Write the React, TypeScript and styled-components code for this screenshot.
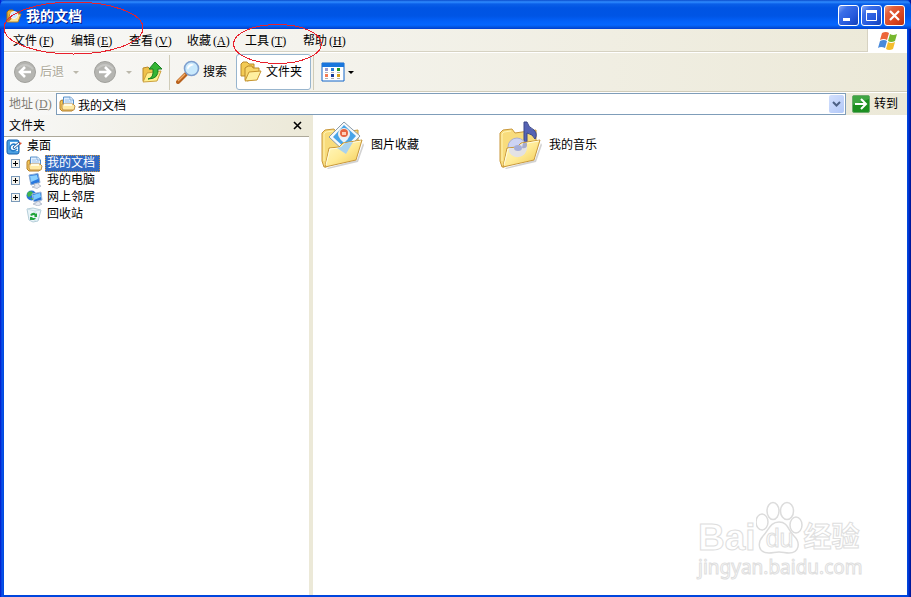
import React from 'react';
import styled, { createGlobalStyle, css } from 'styled-components';

const GlobalStyle = createGlobalStyle`
  * { box-sizing: border-box; }
  body {
    margin: 0;
    font-family: 'Liberation Sans', 'Noto Sans CJK SC', sans-serif;
    font-size: 12px;
    line-height: 16px;
    color: #000;
    background: #0a2fd8;
  }
  button, input {
    font: inherit;
    color: inherit;
    padding: 0;
    margin: 0;
    border: 0;
    background: none;
  }
  svg { display: block; flex: none; }
`;

const Window = styled.div`
  position: relative;
  display: flex;
  flex-direction: column;
  min-height: 100vh;
  padding: 0 4px 2px;
  background: linear-gradient(to right, #0018c8 0, #0831d9 1px, #0855ec 2px, #0046dd 4px, #0046dd calc(100% - 3px), #0028c8 calc(100% - 2px), #00138c 100%);
`;

const TitleBar = styled.header`
  display: flex;
  align-items: center;
  height: 29px;
  margin: 0 -4px;
  padding: 2px 6px 0;
  gap: 4px;
  border-radius: 6px 6px 0 0;
  background: linear-gradient(to bottom, #0a4ccc 0, #2f8cff 2px, #0a5fe8 4px, #0054e3 8px, #0055e5 16px, #0360f8 21px, #0566ff 25px, #0455e0 27px, #003dd0 29px);
`;

const Title = styled.h1`
  flex: 1;
  margin: 0;
  font-size: 14px;
  line-height: 16px;
  font-weight: 700;
  color: #fff;
  text-shadow: 1px 1px 0 #0a1883;
`;

const Caption = styled.div`
  display: flex;
  gap: 2px;
`;

const CaptionButton = styled.button<{ $close?: boolean }>`
  width: 21px;
  height: 21px;
  border: 1px solid #fff;
  border-radius: 3px;
  background: ${(p) =>
    p.$close
      ? 'linear-gradient(135deg, #f0a080 0, #e2603c 25%, #d9451f 65%, #b83010 100%)'
      : 'linear-gradient(135deg, #88a8f8 0, #3b6fe8 25%, #2558dc 65%, #1240b8 100%)'};
`;

const barFill = css`
  background: linear-gradient(to right, #f8f8f7, #ece9d8);
`;

const MenuRow = styled.div`
  display: flex;
  height: 24px;
  border-bottom: 1px solid #fff;
  ${barFill}
`;

const MenuBar = styled.nav`
  flex: 1;
  display: flex;
  align-items: center;
  gap: 16px;
  padding: 1px 0 0 9px;
  border-bottom: 1px solid #d6d2c2;
  border-right: 1px solid #d6d2c2;
`;

const MenuItem = styled.button`
  display: flex;
  align-items: center;
  width: 42px;
  white-space: nowrap;
`;

const Key = styled.span`
  display: flex;
  margin-left: 2px;
  font-family: 'Liberation Serif', serif;
  font-size: 12px;
  line-height: 16px;
`;

const Flag = styled.div`
  display: flex;
  align-items: center;
  justify-content: center;
  width: 39px;
  background: #fff;
`;

const Toolbar = styled.div`
  display: flex;
  align-items: center;
  height: 39px;
  padding: 0 9px;
  border-bottom: 1px solid #d0ccba;
  ${barFill}
`;

const ToolButton = styled.button<{ $muted?: boolean; $pressed?: boolean; $wide?: number }>`
  display: flex;
  align-items: center;
  gap: 3px;
  height: 36px;
  width: ${(p) => (p.$wide ? p.$wide + 'px' : 'auto')};
  white-space: nowrap;
  ${(p) => p.$muted && css`color: #aca899; text-shadow: 1px 1px 0 #fff;`}
  ${(p) =>
    p.$pressed &&
    css`
      padding: 0 3px;
      gap: 4px;
      border: 1px solid #98b5ce;
      border-radius: 3px;
      background: #fff;
    `}
`;

const Divider = styled.span<{ $tight?: boolean }>`
  width: 1px;
  height: 35px;
  margin: ${(p) => (p.$tight ? '0 7px 0 2px' : '0 6px')};
  background: #d0ccb8;
`;

const ToolGap = styled.span`
  width: 3px;
`;

const Caret = styled.span<{ $muted?: boolean }>`
  border: 3px solid transparent;
  border-top-color: ${(p) => (p.$muted ? '#bbb8ab' : '#000')};
  border-bottom: 0;
`;

const AddressBar = styled.form`
  display: flex;
  align-items: center;
  height: 23px;
  border-top: 1px solid #fff;
  ${barFill}
`;

const AddressLabel = styled.label`
  display: flex;
  width: 52px;
  padding-left: 5px;
  white-space: nowrap;
  color: #7f7c73;
`;

const AddressBox = styled.div`
  flex: 1;
  display: flex;
  align-items: center;
  height: 22px;
  padding: 0 1px 0 2px;
  gap: 2px;
  border: 1px solid #7f9db9;
  background: #fff;
`;

const AddressInput = styled.input`
  flex: 1;
  min-width: 0;
  height: 18px;
  outline: 0;
`;

const DropButton = styled.button`
  display: flex;
  align-items: center;
  justify-content: center;
  width: 15px;
  height: 18px;
  border-radius: 2px;
  background: linear-gradient(135deg, #d3e0fd, #b2c8f8);
`;

const GoButton = styled.button`
  display: flex;
  align-items: center;
  gap: 4px;
  width: 61px;
  padding-left: 6px;
`;

const Body = styled.div`
  flex: 1;
  display: flex;
  background: #ece9d8;
`;

const Sidebar = styled.aside`
  width: 305px;
  background: #fff;
`;

const PaneHeader = styled.div`
  display: flex;
  justify-content: space-between;
  align-items: center;
  height: 22px;
  padding: 0 6px 0 5px;
  border-bottom: 1px solid #aca899;
  ${barFill}
`;

const CloseButton = styled.button`
  display: flex;
  align-items: center;
  height: 14px;
`;

const Tree = styled.ul`
  margin: 0;
  padding: 1px 0 0;
  list-style: none;
`;

const TreeRow = styled.li<{ $root?: boolean }>`
  display: flex;
  align-items: center;
  height: 17px;
  padding-left: ${(p) => (p.$root ? 2 : 7)}px;
`;

const Toggle = styled.span`
  display: flex;
  width: 15px;
`;

const ToggleButton = styled.button`
  width: 9px;
  height: 9px;
`;

const Label = styled.span<{ $selected?: boolean }>`
  margin-left: 2px;
  padding: 0 1px;
  line-height: 15px;
  border: 1px solid transparent;
  ${(p) =>
    p.$selected &&
    css`
      padding-right: 4px;
      color: #fff;
      background: #316ac5;
      border: 1px dotted #ce953a;
    `}
`;

const Content = styled.main`
  position: relative;
  flex: 1;
  margin-left: 4px;
  padding: 6px 7px;
  background: #fff;
`;

const Files = styled.div`
  display: grid;
  grid-template-columns: repeat(auto-fill, 178px);
`;

const FileItem = styled.div`
  display: flex;
  align-items: center;
  gap: 7px;
  height: 48px;
`;

const Watermark = styled.div`
  position: absolute;
  right: 45px;
  bottom: 16px;
  width: 164px;
  color: #fff;
  -webkit-text-stroke: 1px #dedede;
`;

const Brand = styled.div`
  display: flex;
  align-items: flex-end;
  height: 54px;
  font-weight: 700;
  font-size: 37px;
  line-height: 34px;
`;

const Paw = styled.div`
  display: grid;
  place-items: end center;
  width: 48px;
  & > * { grid-area: 1 / 1; }
`;

const Du = styled.span`
  font-size: 25px;
  line-height: 34px;
  font-weight: 400;
`;

const Cn = styled.span`
  font-size: 28px;
`;

const Site = styled.div`
  font-family: 'Noto Sans', sans-serif;
  font-size: 19px;
  line-height: 24px;
`;

const Marks = styled.svg`
  position: absolute;
  left: 0;
  top: 0;
  pointer-events: none;
`;

const FolderSearch = () => (
  <svg width="16" height="16" viewBox="0 0 16 16">
    <path d="M1 13V4l2-2h4l1 2h5v3" fill="#e9b33e" stroke="#9c6a13" />
    <path d="M1 14 4 6h11l-3 8z" fill="#ffe393" stroke="#b98421" />
    <circle cx="8" cy="7" r="3.5" fill="#cbeaff" stroke="#f4f6fb" />
    <path d="m5 10-3 3" stroke="#c66b29" strokeWidth="2" />
  </svg>
);

const DocsIcon = () => (
  <svg width="17" height="16" viewBox="0 0 17 16">
    <path d="M1 6q0-2 3-2v8h11v1l-2 2H3l-2-2z" fill="#f4c85b" stroke="#b5812c" />
    <path d="M4.5 1h7l3 3v6h-10z" fill="#e2f0ff" stroke="#5790cb" />
    <path d="M11 1v3h3" fill="#fff" stroke="#5790cb" strokeWidth=".7" />
    <path d="M6 4h4M6 6h7" stroke="#9cc2ec" />
    <path d="M3 8h11l2 2-1 4H4l-1-2z" fill="#ffeaa6" stroke="#c2924a" />
    <path d="M5 8h8v2H5z" fill="#fffbe4" />
  </svg>
);

const DesktopIcon = () => (
  <svg width="17" height="16" viewBox="0 0 17 16">
    <rect x="1" y="1" width="12" height="14" rx="2" fill="#4aa0e3" stroke="#1660ad" />
    <path d="M4 3h8v9H4z" fill="#f3faff" />
    <path d="M10 6C7 4 4 6 4 9s4 4 7 1" fill="none" stroke="#267cc8" strokeWidth="1.6" />
    <path d="m7 8 6-5 1 2-6 5z" fill="#fff" stroke="#1a5da5" />
    <path d="m13 3 3 1-2 2z" fill="#df5634" />
  </svg>
);

const ComputerIcon = () => (
  <svg width="17" height="16" viewBox="0 0 17 16">
    <path d="m3 2 9-1.5 2 9L5 12z" fill="#2979df" stroke="#8cabd3" />
    <path d="m4 3 7-1 1 4-7 3z" fill="#8bd1ff" />
    <path d="m8 11 4-1 1 2 2 1-4 2.5L6 14l3-1z" fill="#e5e9f1" stroke="#a4aec0" strokeWidth=".7" />
  </svg>
);

const NetworkIcon = () => (
  <svg width="17" height="16" viewBox="0 0 17 16">
    <circle cx="5.5" cy="5.5" r="5" fill="#2877db" />
    <path d="M2 2q4-2 5 1L5 6 2 7 1 4zM4 8h4l-1 2z" fill="#42b54b" />
    <path d="m6 4 9-2 1 8-8 2z" fill="#2672d4" stroke="#a5bad8" />
    <path d="m7 5 7-2 1 4-7 3z" fill="#7bcbff" />
    <path d="m10 12 4-1v2l2 1-4 2-5-2 3-1z" fill="#e5e9f1" stroke="#a4aec0" strokeWidth=".7" />
  </svg>
);

const BinIcon = () => (
  <svg width="17" height="16" viewBox="0 0 17 16">
    <path d="m1 2 6-1 8 2-3 11-5 1-4-2z" fill="#e9f5f9" stroke="#b5ced9" />
    <path d="m1 2 8 2 6-1M9 4v10" fill="none" stroke="#c9dde6" />
    <path d="M4 8q3-4 6-1l1-1v4H8l1-1q-2-2-3 0zM4 10v3h4l2-2H7l-1-1z" fill="#21a43c" />
  </svg>
);

const NavIcon = ({ forward }: { forward?: boolean }) => (
  <svg width="24" height="24" viewBox="0 0 24 24">
    <circle cx="12" cy="12" r="10.5" fill="#b5b5b1" stroke="#a1a19d" />
    <path d="M4 9q8-8 16 0" stroke="#c6c6c3" strokeWidth="2" fill="none" />
    <path
      d={forward ? 'M6 12h11m-5-5 5 5-5 5' : 'M18 12H7m5-5-5 5 5 5'}
      fill="none"
      stroke="#fff"
      strokeWidth="2.6"
    />
  </svg>
);

const UpIcon = () => (
  <svg width="21" height="24" viewBox="0 0 21 24">
    <path d="M1 21V8l5-1 2 2 7-1v5" fill="#efc24c" stroke="#ba8a2b" />
    <path d="m1 22 4-9 14-2-4 10z" fill="#fff08e" stroke="#cca03c" />
    <path d="M6 19q6-1 5-10H7l6-7 7 7h-4q1 10-10 10z" fill="#35b534" stroke="#177f21" />
  </svg>
);

const SearchIcon = () => (
  <svg width="24" height="24" viewBox="0 0 24 24">
    <path d="m10 14-8 8" stroke="#b8621e" strokeWidth="4" strokeLinecap="round" />
    <path d="m9 14-7 7" stroke="#f3ad68" strokeWidth="1.5" />
    <circle cx="15.5" cy="8.5" r="7" fill="#c9e9fc" stroke="#7e9fce" strokeWidth="1.6" />
    <path d="M11 8q1-4 5-4l2 1q-5 1-6 5z" fill="#fff" />
  </svg>
);

const FoldersIcon = () => (
  <svg width="22" height="22" viewBox="0 0 22 22">
    <path d="M1 15V3l2-2h4l2 2h5v5L5 15z" fill="#f3cb55" stroke="#b98a2c" />
    <path d="M5 19V7l3-2h4l1 2h6v5L8 20z" fill="#f8d76b" stroke="#b98a2c" />
    <path d="m5 20 4-9 12-1-4 9z" fill="#fff0a0" stroke="#c69630" />
  </svg>
);

const ViewsIcon = () => (
  <svg width="24" height="20" viewBox="0 0 24 20">
    <path d="M1 1h22v18H1z" fill="#fff" stroke="#1064c8" />
    <path d="M1 1h22v4H1z" fill="#1976dd" />
    {['#9b9bce', '#277bd6', '#229928', '#f67b52', '#173c98', '#d5a019'].map((c, i) => (
      <g key={c}>
        <path d={`M${4 + (i % 3) * 6} ${i < 3 ? 6 : 12}h3v3h-3z`} fill={c} />
        <path d={`M${4 + (i % 3) * 6} ${i < 3 ? 10.5 : 16.5}h3`} stroke="#b1b1b1" />
      </g>
    ))}
  </svg>
);

const WindowsIcon = () => (
  <svg width="22" height="20" viewBox="0 0 22 20">
    <path d="M5 2q4-2 7 0l-2 7q-3-2-7 0z" fill="#ed6538" />
    <path d="M13 3q3 2 7 0l-2 7q-4 2-7 0z" fill="#77b72f" />
    <path d="M3 10q4-2 7 0l-2 7q-4-2-7 0z" fill="#4889db" />
    <path d="M11 11q3 2 7 0l-2 7q-4 2-7 0z" fill="#f5bd2c" />
  </svg>
);

const GoIcon = () => (
  <svg width="18" height="18" viewBox="0 0 18 18">
    <rect x=".5" y=".5" width="17" height="17" rx="1.5" fill="#1c8f20" stroke="#6aa96c" />
    <path d="M1 1h16v3L1 10z" fill="#3fa542" />
    <path d="M3 9h11M9 4l5 5-5 5" fill="none" stroke="#fff" strokeWidth="2" />
  </svg>
);

const PlusIcon = () => (
  <svg width="9" height="9" viewBox="0 0 9 9">
    <rect x=".5" y=".5" width="8" height="8" fill="#f6f4ee" stroke="#7b9ab9" />
    <path d="M2 4.5h5M4.5 2v5" stroke="#000" />
  </svg>
);

const BigFolder = ({ music }: { music?: boolean }) => {
  const id = music ? 'flap-music' : 'flap-pictures';
  return (
    <svg width="44" height="48" viewBox="0 0 44 48">
      <defs>
        <linearGradient id={id} x1="0" y1="0" x2="1" y2="1">
          <stop offset="0" stopColor="#fffbc8" />
          <stop offset=".5" stopColor="#ffeb97" />
          <stop offset="1" stopColor="#f0c850" />
        </linearGradient>
      </defs>
      <path d="m7 47 30-8 6-17 1 2-6 17-30 7z" fill="#b4b4b4" opacity=".6" />
      <path d="M4 46 2 40V12l3-3 9-1 3 4 21-3v14L6 46z" fill="#f8dc7c" stroke="#c8973a" />
      <path d="M4 40V13l2-2 7-1" fill="none" stroke="#fff3b4" />
      {music ? (
        <>
          <path d="M26 26V1h3q1 5 7 8 4 4 1 9-2-5-8-6v13z" fill="#5563b4" stroke="#3b4788" />
          <circle cx="19" cy="26" r="9" fill="#cdd3f4" stroke="#a9aed0" />
        </>
      ) : (
        <>
          <path d="m24 1 16 14-15 16L9 16z" fill="#f6f9fb" stroke="#8a9ba8" />
          <path d="m24 4 12 11-11 12-12-11z" fill="#48a4e8" />
          <circle cx="24" cy="13" r="6" fill="#f4ede8" />
          <circle cx="24" cy="12" r="4" fill="#e7653f" />
          <path d="M22 11h4v3h-4z" fill="#ffcfb8" />
          <path d="M20 18q4-4 8 0l-4 4z" fill="#e9f3fa" />
        </>
      )}
      <path d="m5 46 4-19 10-1 4-4 19-3-6 20z" fill={`url(#${id})`} stroke="#c8973a" />
      <path d="m6 44 4-16 10-1 4-4 17-3" fill="none" stroke="#fffce0" />
      {music ? (
        <>
          <path d="M11 27h8l4-4 5-1a9 9 0 0 1-17 9z" fill="#dedff0" opacity=".85" />
          <ellipse cx="20" cy="27" rx="4" ry="3" fill="#a5add9" />
          <path d="M25 22h4v3q-1 3-5 2z" fill="#8a93c2" opacity=".7" />
        </>
      ) : (
        <path d="m17 27 4-1 4-4 8-1-7 12z" fill="#a9d2ee" />
      )}
    </svg>
  );
};

const menus = [
  ['文件', 'F'],
  ['编辑', 'E'],
  ['查看', 'V'],
  ['收藏', 'A'],
  ['工具', 'T'],
  ['帮助', 'H'],
];

const nodes = [
  { name: '我的文档', Icon: DocsIcon, expandable: true, selected: true },
  { name: '我的电脑', Icon: ComputerIcon, expandable: true },
  { name: '网上邻居', Icon: NetworkIcon, expandable: true },
  { name: '回收站', Icon: BinIcon },
];

export default function App() {
  return (
    <>
      <GlobalStyle />
      <Window>
        <TitleBar>
          <FolderSearch />
          <Title>我的文档</Title>
          <Caption>
            <CaptionButton aria-label="最小化">
              <svg width="19" height="19"><path d="M4 12h7v3H4z" fill="#fff" /></svg>
            </CaptionButton>
            <CaptionButton aria-label="最大化">
              <svg width="19" height="19">
                <path d="M4.5 5v9.5h10V5" fill="none" stroke="#fff" />
                <path d="M4 4h11v3H4z" fill="#fff" />
              </svg>
            </CaptionButton>
            <CaptionButton $close aria-label="关闭">
              <svg width="19" height="19"><path d="m5 5 9 9m0-9-9 9" stroke="#fff" strokeWidth="2.2" /></svg>
            </CaptionButton>
          </Caption>
        </TitleBar>

        <MenuRow>
          <MenuBar>
            {menus.map(([name, key]) => (
              <MenuItem key={key}>
                {name}
                <Key>(<u>{key}</u>)</Key>
              </MenuItem>
            ))}
          </MenuBar>
          <Flag><WindowsIcon /></Flag>
        </MenuRow>

        <Toolbar>
          <ToolButton $muted $wide={80}>
            <NavIcon />
            后退
            <ToolGap />
            <Caret $muted />
          </ToolButton>
          <ToolButton $muted $wide={49} aria-label="前进">
            <NavIcon forward />
            <ToolGap />
            <Caret $muted />
          </ToolButton>
          <ToolButton aria-label="向上"><UpIcon /></ToolButton>
          <Divider />
          <ToolButton $wide={60}><SearchIcon />搜索</ToolButton>
          <ToolButton $pressed $wide={75}><FoldersIcon />文件夹</ToolButton>
          <Divider $tight />
          <ToolButton aria-label="查看"><ViewsIcon /><Caret /></ToolButton>
        </Toolbar>

        <AddressBar onSubmit={(e) => e.preventDefault()}>
          <AddressLabel htmlFor="address">
            地址
            <Key>(<u>D</u>)</Key>
          </AddressLabel>
          <AddressBox>
            <DocsIcon />
            <AddressInput id="address" defaultValue="我的文档" />
            <DropButton type="button" aria-label="展开地址">
              <svg width="9" height="7"><path d="m1 1 3.5 3.5L8 1" fill="none" stroke="#4d6185" strokeWidth="2" /></svg>
            </DropButton>
          </AddressBox>
          <GoButton type="submit"><GoIcon />转到</GoButton>
        </AddressBar>

        <Body>
          <Sidebar>
            <PaneHeader>
              文件夹
              <CloseButton aria-label="关闭文件夹">
                <svg width="10" height="10"><path d="m1 1 7 7m0-7L1 8" stroke="#000" strokeWidth="1.6" /></svg>
              </CloseButton>
            </PaneHeader>
            <Tree>
              <TreeRow $root><DesktopIcon /><Label>桌面</Label></TreeRow>
              {nodes.map(({ name, Icon, expandable, selected }) => (
                <TreeRow key={name}>
                  <Toggle>
                    {expandable && <ToggleButton aria-label={`展开${name}`}><PlusIcon /></ToggleButton>}
                  </Toggle>
                  <Icon />
                  <Label $selected={selected}>{name}</Label>
                </TreeRow>
              ))}
            </Tree>
          </Sidebar>
          <Content>
            <Files>
              <FileItem><BigFolder />图片收藏</FileItem>
              <FileItem><BigFolder music />我的音乐</FileItem>
            </Files>
            <Watermark>
              <Brand>
                Bai
                <Paw>
                  <svg width="48" height="54" viewBox="0 0 48 54" fill="#fff" stroke="#dcdcdc" strokeWidth="1.5">
                    <ellipse cx="6" cy="21" rx="6" ry="8" />
                    <ellipse cx="17" cy="10" rx="6" ry="8.5" />
                    <ellipse cx="31" cy="10" rx="6.5" ry="8.5" />
                    <ellipse cx="40" cy="24" rx="6" ry="8" />
                    <path d="M23 21c9 0 9 8 15 14 7 7 5 17-5 17-4 0-6-1-10-1s-6 1-10 1C2 52 1 42 7 35c6-6 7-14 16-14z" />
                  </svg>
                  <Du>du</Du>
                </Paw>
                <Cn>经验</Cn>
              </Brand>
              <Site>jingyan.baidu.com</Site>
            </Watermark>
          </Content>
        </Body>

        <Marks width="330" height="70" fill="none" stroke="#e8202c" shapeRendering="crispEdges">
          <ellipse cx="73.5" cy="28" rx="69.5" ry="26" />
          <ellipse cx="277.5" cy="44" rx="44" ry="19.5" />
        </Marks>
      </Window>
    </>
  );
}
